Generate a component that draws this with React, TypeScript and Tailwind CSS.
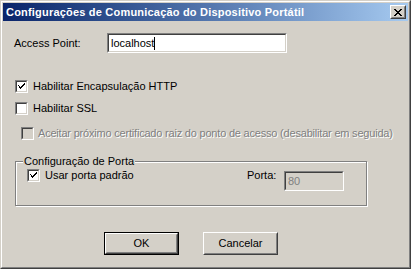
import React from 'react';

const font = { fontFamily: '"Liberation Sans", Arial, sans-serif' };

// Caixa de seleção no estilo clássico (afundada)
const Check = ({ checked, disabled }: { checked?: boolean; disabled?: boolean }) => (
  <div className="w-[13px] h-[13px] shrink-0 border border-t-[#808080] border-l-[#808080] border-r-white border-b-white">
    <div
      className={`w-full h-full border border-t-[#404040] border-l-[#404040] border-r-[#d4d0c8] border-b-[#d4d0c8] flex items-center justify-center ${
        disabled ? 'bg-[#d4d0c8]' : 'bg-white'
      }`}
    >
      {checked && (
        <svg width="7" height="7" viewBox="0 0 7 7" shapeRendering="crispEdges">
          <path d="M0 2h1v3h1v1h1v-1h1v-1h1v-1h1v-1h1v-2h-1v1h-1v1h-1v1h-1v1h-1v-1h-1v-1z" fill="#000" />
          <path d="M0 2h1v1h-1zM1 3h1v1h-1z" fill="#000" />
        </svg>
      )}
    </div>
  </div>
);

const Sunken = ({ className, children, disabled }: { className: string; children?: React.ReactNode; disabled?: boolean }) => (
  <div className={`${className} shrink-0 border border-t-[#808080] border-l-[#808080] border-r-white border-b-white`}>
    <div
      className={`w-full h-full border border-t-[#404040] border-l-[#404040] border-r-[#d4d0c8] border-b-[#d4d0c8] flex items-center pl-[2px] text-[11px] ${
        disabled ? 'bg-[#d4d0c8] text-[#808080]' : 'bg-white text-black'
      }`}
    >
      {children}
    </div>
  </div>
);

const Button = ({ label, isDefault }: { label: string; isDefault?: boolean }) => (
  <div className={`w-[75px] h-[23px] ${isDefault ? 'border border-black' : ''}`}>
    <div className="w-full h-full border border-t-white border-l-white border-r-[#404040] border-b-[#404040]">
      <div className="w-full h-full border border-t-[#d4d0c8] border-l-[#d4d0c8] border-r-[#808080] border-b-[#808080] flex items-center justify-center text-[11px] text-black">
        {label}
      </div>
    </div>
  </div>
);

export default function App() {
  return (
    <div
      className="w-[411px] h-[269px] border border-t-[#d4d0c8] border-l-[#d4d0c8] border-r-[#404040] border-b-[#404040] bg-[#d4d0c8]"
      style={font}
    >
      <div className="w-full h-full border border-t-white border-l-white border-r-[#808080] border-b-[#808080] p-[1px] flex flex-col">
        {/* barra de título */}
        <div className="h-[18px] shrink-0 flex items-center justify-between pl-[3px] pr-[2px] bg-gradient-to-r from-[#0a246a] to-[#a6caf0]">
          <span className="text-white font-bold text-[11px] leading-none tracking-[0.2px]">
            Configurações de Comunicação do Dispositivo Portátil
          </span>
          <div className="w-[16px] h-[14px] border border-t-white border-l-white border-r-[#404040] border-b-[#404040]">
            <div className="w-full h-full border border-t-[#d4d0c8] border-l-[#d4d0c8] border-r-[#808080] border-b-[#808080] bg-[#d4d0c8] flex items-center justify-center">
              <svg width="8" height="7" viewBox="0 0 8 7" shapeRendering="crispEdges">
                <path d="M0 0h2v1h1v1h2v-1h1v-1h2v1h-1v1h-1v1h-1v1h1v1h1v1h1v1h-2v-1h-1v-1h-2v1h-1v1h-2v-1h1v-1h1v-1h1v-1h-1v-1h-1v-1h-1z" fill="#000" />
              </svg>
            </div>
          </div>
        </div>

        {/* corpo */}
        <div className="flex flex-col text-[11px] text-black leading-[13px]">
          <div className="mt-[12px] pl-[11px] flex items-center h-[20px]">
            <span className="w-[93px]">Access Point:</span>
            <Sunken className="w-[180px] h-[20px]">
              <span>localhost</span>
              <span className="w-[1px] h-[13px] bg-black" />
            </Sunken>
          </div>

          <div className="mt-[27px] pl-[12px] flex items-center gap-[5px] h-[13px]">
            <Check checked />
            <span>Habilitar Encapsulação HTTP</span>
          </div>

          <div className="mt-[9px] pl-[12px] flex items-center gap-[5px] h-[13px]">
            <Check />
            <span>Habilitar SSL</span>
          </div>

          <div className="mt-[12px] pl-[18px] flex items-center gap-[4px] h-[13px]">
            <Check disabled />
            <span className="text-[#808080] tracking-[-0.2px] [text-shadow:1px_1px_0_#fff]">
              Aceitar próximo certificado raiz do ponto de acesso (desabilitar em seguida)
            </span>
          </div>

          {/* grupo Configuração de Porta */}
          <div className="mt-[21px] ml-[12px] w-[352px] h-[45px] relative border border-[#808080] shadow-[1px_1px_0_#fff,inset_1px_1px_0_#fff]">
            <span className="absolute left-[7px] -top-[7px] bg-[#d4d0c8] px-[1px]">Configuração de Porta</span>
            <div className="flex items-start pl-[11px] pt-[7px]">
              <div className="w-[220px] flex items-center gap-[5px] h-[13px]">
                <Check checked />
                <span>Usar porta padrão</span>
              </div>
              <span className="w-[37px] h-[13px]">Porta:</span>
              <div className="mt-[2px]">
                <Sunken className="w-[60px] h-[20px]" disabled>
                  <span>80</span>
                </Sunken>
              </div>
            </div>
          </div>

          <div className="mt-[26px] pl-[101px] flex gap-[24px]">
            <Button label="OK" isDefault />
            <Button label="Cancelar" />
          </div>
        </div>
      </div>
    </div>
  );
}
